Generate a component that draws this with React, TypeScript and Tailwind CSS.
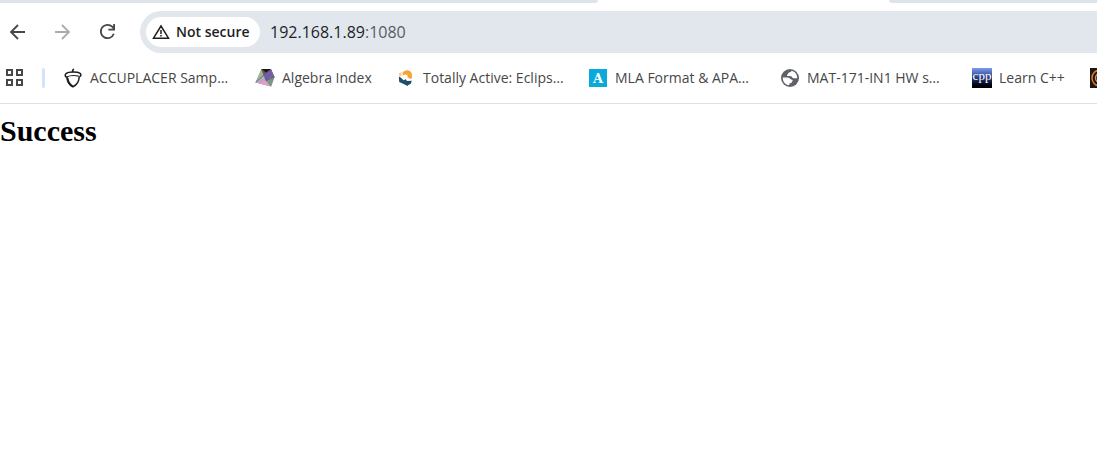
import React from "react";

function AppsIcon() {
  return (
    <svg width="20" height="20" viewBox="0 0 20 20" fill="none" stroke="#474747" strokeWidth="2">
      <path d="M3 2h5v5H3zM13 2h5v5h-5zM3 12h5v5H3zM13 12h5v5h-5z" />
    </svg>
  );
}

function BackIcon() {
  return (
    <svg width="20" height="20" viewBox="0 0 20 20" fill="none" stroke="#474747" strokeWidth="1.8">
      <path d="M17 10H3.500M10 3L3 10l7 7" />
    </svg>
  );
}

function ForwardIcon() {
  return (
    <svg width="20" height="20" viewBox="0 0 20 20" fill="none" stroke="#ababab" strokeWidth="1.8">
      <path d="M2 10h13.500M9 3l7 7-7 7" />
    </svg>
  );
}

function ReloadIcon() {
  return (
    <svg width="20" height="20" viewBox="0 0 20 20" fill="none" stroke="#474747" strokeWidth="1.8">
      <path d="M15.800 11.800A6.700 6.700 0 1 1 14.200 4.700L16 6.700M16.100 2v5.700h-5.700" />
    </svg>
  );
}

function WarningIcon() {
  return (
    <svg width="18" height="16" viewBox="0 0 18 16" fill="none" stroke="#1f1f1f">
      <path d="M9 2L1.500 14.200h15z" strokeWidth="1.5" />
      <path d="M9 6v4M9 11v1.500" strokeWidth="1.5" />
    </svg>
  );
}

function AcornIcon() {
  return (
    <svg width="20" height="20" viewBox="0 0 20 20" fill="none" stroke="#1e1e1e">
      <path d="M9.500 4.200C9.400 2.600 9.800 1.600 10.800.8" strokeWidth="1.7" />
      <path d="M3.800 9.200C1.800 8.800 1.700 6.600 3.300 5.400C5.400 3.700 14.200 3.400 16.800 5.200C18.600 6.500 18 8.300 16.300 8.800" strokeWidth="1.5" />
      <path d="M4 8.500c0 5 2 8.500 6 10.300c4.200-2 6.100-5.200 6.200-10" strokeWidth="1.500" />
      <path d="M3.700 8.900C7 7.300 12 7.200 15.800 8.100" strokeWidth="1.100" />
      <path d="M4.500 10c.3 4 2 6.400 5.100 8.300" strokeWidth="2" />
    </svg>
  );
}

function GemIcon() {
  return (
    <svg width="20" height="20" viewBox="0 0 20 20">
      <path d="M6.500 1L16 1l3.500 8L16 18.500.5 14.500z" fill="#7b7d80" />
      <path d="M6.500 1L.5 14.500 9 6z" fill="#9fb79b" />
      <path d="M6.500 1H16l-5 4z" fill="#1d1322" />
      <path d="M6.500 1l4.500 4-2 1.500z" fill="#6a6128" />
      <path d="M11 5l5-4 3.500 8-6 .5z" fill="#75609a" />
      <path d="M8.500 7l9-1.500-6.500 7.500z" fill="#7258bd" />
      <path d="M.5 14.500L9 6.500l2 6z" fill="#b5afb8" />
      <path d="M.5 14.500L11 12.500l5 6z" fill="#e29cd2" />
      <path d="M11 12.500L19.500 9 16 18.500z" fill="#799a82" />
      <path d="M6.500 1L11 12.500M16 1L.5 14.500M11 12.500L19.500 9" fill="none" stroke="#453e55" strokeWidth=".5" />
    </svg>
  );
}

function SwirlIcon() {
  return (
    <svg width="20" height="20" viewBox="0 0 20 20">
      <path d="M6.500 4.800C8.500 1.500 12.500 1.300 15 4c1.500 2 1.300 5 .2 7.200l-3.700-1.700V7.300l-2.500-.8-2.200 1z" fill="#f8a33a" />
      <path d="M3 5.500L5.500 4v4.200L3 8z" fill="#f8c98a" />
      <path d="M2.800 8.500l2.200 1.300 2.500 2.500 2.200-1 1.300 1.800 4.800-.3-1 3-2.500 1.200-.8 1-3.300-1.700-5-2.300z" fill="#1d4f68" />
      <path d="M6.500 8.500L9 6.800l2.300 1-.3 2.500H8.500z" fill="#fff" />
    </svg>
  );
}

function LetterIcon() {
  return (
    <span className="flex size-[18px] items-center justify-center bg-[#09a9dc] font-['DejaVu_Serif',serif] text-[13px] leading-none font-bold text-white">
      A
    </span>
  );
}

function GlobeIcon() {
  return (
    <svg width="20" height="20" viewBox="0 0 20 20">
      <circle cx="10" cy="10" r="9" fill="#5f6368" />
      <path d="M11.500 2.800c-.3 1.200-1.300 1.300-2.500 1.700-1 .4-.8 1.500-1.600 1.900-.8.4-.4 1.600.8 1.700 1.800.2 3.600-.1 4.200 1.400.3 1 1.500.8 2.600.8h2.200c.3-3.500-2-6.600-5.700-7.500zM2.800 9.500c-.3 4 2.500 7.500 6.500 7.700v-1.700c1.800 0 2.600-.7 2.600-1.900 1.100-.2 1.100-1.700 0-1.900-1.600-.2-2.200-2.200-4.500-2.200z" fill="#fff" />
    </svg>
  );
}

function CppIcon() {
  return (
    <span className="flex size-5 justify-center overflow-hidden bg-linear-to-b from-[#7c9cf5] via-[#283c79] to-black font-['Liberation_Serif',serif] text-[13px] leading-4 text-white">
      cpp
    </span>
  );
}

function DiscIcon() {
  return (
    <svg width="20" height="20" viewBox="0 0 20 20">
      <path d="M0 0h20v20H0z" fill="#21150f" />
      <circle cx="10" cy="10" r="8" fill="none" stroke="#d98134" strokeWidth="1.500" />
      <circle cx="10" cy="10" r="4.500" fill="none" stroke="#c99365" strokeWidth="1.500" />
    </svg>
  );
}

const bookmarks = [
  { label: "ACCUPLACER Samp…", Icon: AcornIcon, width: "w-[168px]" },
  { label: "Algebra Index", Icon: GemIcon, width: "w-[117px]" },
  { label: "Totally Active: Eclips…", Icon: SwirlIcon, width: "w-[168px]" },
  { label: "MLA Format & APA…", Icon: LetterIcon, width: "w-[168px]" },
  { label: "MAT-171-IN1 HW s…", Icon: GlobeIcon, width: "w-[168px]" },
  { label: "Learn C++", Icon: CppIcon, width: "w-[94px]" },
];

export default function App() {
  return (
    <div className="min-h-screen overflow-x-hidden bg-white font-['Open_Sans','Noto_Sans',sans-serif] text-[#1f1f1f]">
      <header className="border-b border-[#dfe0e2]">
        <div className="flex h-[3px] justify-between">
          <div className="w-[54.5%] rounded-br-full bg-[#dde3e9]" />
          <div className="w-[19%] rounded-bl-full bg-[#dde3e9]" />
        </div>
        <div className="flex pt-2 pl-2">
          <nav aria-label="History" className="flex w-[132px] shrink-0 items-center gap-[25px]">
            <button type="button" aria-label="Back"><BackIcon /></button>
            <button type="button" aria-label="Forward" disabled><ForwardIcon /></button>
            <button type="button" aria-label="Reload"><ReloadIcon /></button>
          </nav>
          <div className="flex h-[42px] min-w-0 flex-1 items-center rounded-l-full bg-[#e2e6ed] pl-1.5">
            <button
              type="button"
              className="flex h-[30px] w-[114px] shrink-0 items-center gap-1.5 rounded-full bg-white pl-1.5 text-sm font-semibold whitespace-nowrap"
            >
              <WarningIcon />
              Not secure
            </button>
            <div
              role="textbox"
              aria-label="Address"
              className="ml-2.5 text-base"
            >
              192.168.1.89<span className="text-[#5a5c60]">:1080</span>
            </div>
          </div>
        </div>
        <nav aria-label="Bookmarks" className="flex h-[50px] items-center pl-1">
          <button type="button" aria-label="Apps" className="shrink-0"><AppsIcon /></button>
          <div className="mr-[18px] ml-[18px] h-5 w-[3px] shrink-0 rounded-full bg-[#d3e3fd]" />
          <div className="flex items-center gap-6">
            {bookmarks.map(({ label, Icon, width }) => (
              <a key={label} href="#" className={`flex shrink-0 items-center gap-[7px] text-sm whitespace-nowrap text-[#474747] ${width}`}>
                <span className="flex size-5 shrink-0 items-center justify-center"><Icon /></span>
                {label}
              </a>
            ))}
            <a href="#" aria-label="Bookmark" className="shrink-0"><DiscIcon /></a>
          </div>
        </nav>
      </header>
      <main>
        <h1 className="pt-[9px] font-['Liberation_Serif',serif] text-[30px] leading-9 font-bold text-black">Success</h1>
      </main>
    </div>
  );
}
